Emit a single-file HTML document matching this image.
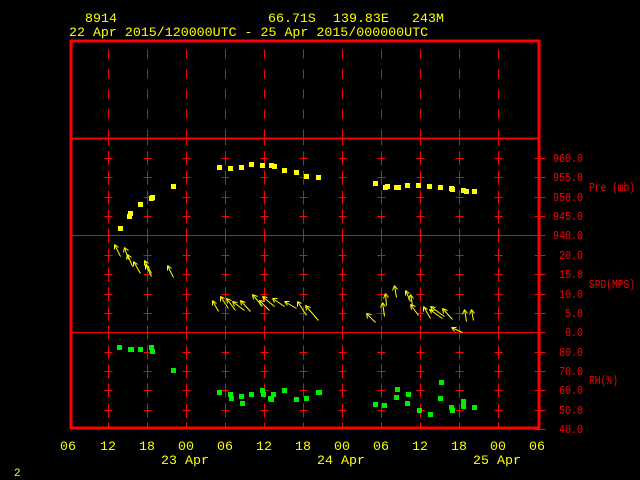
<!DOCTYPE html>
<html><head><meta charset="utf-8"><style>
html,body{margin:0;padding:0;background:#000;width:640px;height:480px;overflow:hidden}
svg{display:block}
text{font-family:"Liberation Mono",monospace}
</style></head><body>
<svg id="s" width="640" height="480" xmlns="http://www.w3.org/2000/svg">
<g fill="#ffff00" font-size="13.3">
<text x="85" y="22">8914</text>
<text x="268" y="22">66.71S</text>
<text x="333" y="22">139.83E</text>
<text x="412" y="22">243M</text>
<text x="69" y="36">22 Apr 2015/120000UTC - 25 Apr 2015/000000UTC</text>
<g text-anchor="middle">
<text x="68" y="450">06</text><text x="108" y="450">12</text><text x="147" y="450">18</text><text x="186" y="450">00</text><text x="225" y="450">06</text><text x="264" y="450">12</text><text x="303" y="450">18</text><text x="342" y="450">00</text><text x="381" y="450">06</text><text x="420" y="450">12</text><text x="459" y="450">18</text><text x="498" y="450">00</text><text x="537" y="450">06</text>
<text x="185" y="464">23 Apr</text><text x="341" y="464">24 Apr</text><text x="497" y="464">25 Apr</text>
</g>
<text x="14" y="476" font-size="11">2</text>
</g>
<g fill="#ff0000" font-size="12" id="lab"></g>
<g fill="#ff0000" font-size="12">
<text x="589" y="191" textLength="46" lengthAdjust="spacingAndGlyphs">Pre (mb)</text>
<text x="589" y="288" textLength="46" lengthAdjust="spacingAndGlyphs">SPD(MPS)</text>
<text x="589" y="384" textLength="29" lengthAdjust="spacingAndGlyphs">RH(%)</text>
</g>
<g id="grid" stroke="#ff0000" stroke-width="1"></g>
<rect x="71" y="41" width="468" height="387" fill="none" stroke="#ff0000" stroke-width="3"/>
<g id="dat"></g>
</svg>
<script>
var NS="http://www.w3.org/2000/svg";
function el(p,t,a){var e=document.createElementNS(NS,t);for(var k in a)e.setAttribute(k,a[k]);p.appendChild(e);return e;}
var g=document.getElementById('grid'),lab=document.getElementById('lab'),d=document.getElementById('dat');
function ln(p,x1,y1,x2,y2,c,w){el(p,'line',{x1:x1+.5,y1:y1+.5,x2:x2+.5,y2:y2+.5,stroke:c||'#ff0000','stroke-width':w||1});}
ln(g,71,138,539,138,'#ff0000',2);ln(g,71,235,539,235);ln(g,71,332,539,332);
var cols=[];for(var i=1;i<=11;i++)cols.push(69+39*i);
cols.forEach(function(x){
 for(var y=49;y<138;y+=20)ln(g,x,y,x,y+9);
 [138,235,332].forEach(function(y){ln(g,x,y-7,x,y+7);});
 ln(g,x,422,x,428);
});
var rows=[158,177,197,216,255,274,294,313,352,371,390,410];
rows.forEach(function(y){cols.forEach(function(x){ln(g,x,y-7,x,y+7);ln(g,x-4,y,x+4,y);});});
var all=[158,177,197,216,235,255,274,294,313,332,352,371,390,410,429];
var txt=['960.0','955.0','950.0','945.0','940.0','20.0','15.0','10.0','5.0','0.0','80.0','70.0','60.0','50.0','40.0'];
all.forEach(function(y,i){ln(g,534,y,545,y);var n=txt[i].length;var L=n*6;var t=el(lab,'text',{x:583-L,y:y+4,textLength:L,lengthAdjust:'spacingAndGlyphs'});t.textContent=txt[i];});
var pre=[[120,228],[129,216],[130,213],[140,204],[151,198],[152,197],[173,186],[219,167],[230,168],[241,167],[251,164],[262,165],[271,165],[274,166],[284,170],[296,172],[306,176],[318,177],[375,183],[385,187],[387,186],[396,187],[398,187],[407,185],[418,185],[429,186],[440,187],[451,188],[452,189],[463,190],[466,191],[474,191]];
pre.forEach(function(p){el(d,'rect',{x:p[0]-2,y:p[1]-2,width:5,height:5,fill:'#ffff00'});});
var rh=[[119,347],[130,349],[131,349],[140,349],[151,347],[152,351],[173,370],[219,392],[230,394],[231,398],[241,396],[242,403],[251,394],[262,390],[263,394],[270,398],[271,399],[273,394],[284,390],[296,399],[306,398],[318,392],[319,392],[375,404],[384,405],[397,389],[396,397],[408,394],[407,403],[419,410],[430,414],[441,382],[440,398],[451,407],[452,410],[463,406],[463,401],[474,407]];
rh.forEach(function(p){el(d,'rect',{x:p[0]-2,y:p[1]-2,width:5,height:5,fill:'#00ee00'});});
var w=[[114,244,120,256],[124,247,128,259],[127,254,132,266],[133,261,140,273],[144,260,151,273],[145,264,151,276],[167,265,173,277],
[212,300,218,311],[220,296,228,308],[226,298,235,310],[232,301,244,310],[240,300,250,311],[252,294,262,306],[259,300,269,310],[262,296,274,306],[272,298,284,306],[284,301,296,308],[297,301,306,315],[305,305,318,320],
[366,313,375,322],[382,302,384,316],[385,293,386,305],[394,285,396,297],[405,290,410,301],[410,294,412,305],[410,304,418,315],[423,306,430,318],[429,309,442,318],[430,306,444,316],[442,308,452,319],[451,327,462,332],[464,309,466,321],[471,309,473,320]];
w.forEach(function(a){var hx=a[0],hy=a[1],tx=a[2],ty=a[3];ln(d,hx,hy,tx,ty,'#ffff00');
 var ang=Math.atan2(ty-hy,tx-hx);[0.5,-0.5].forEach(function(o){ln(d,hx,hy,Math.round(hx+5*Math.cos(ang+o)),Math.round(hy+5*Math.sin(ang+o)),'#ffff00');});});
</script>
</body></html>
